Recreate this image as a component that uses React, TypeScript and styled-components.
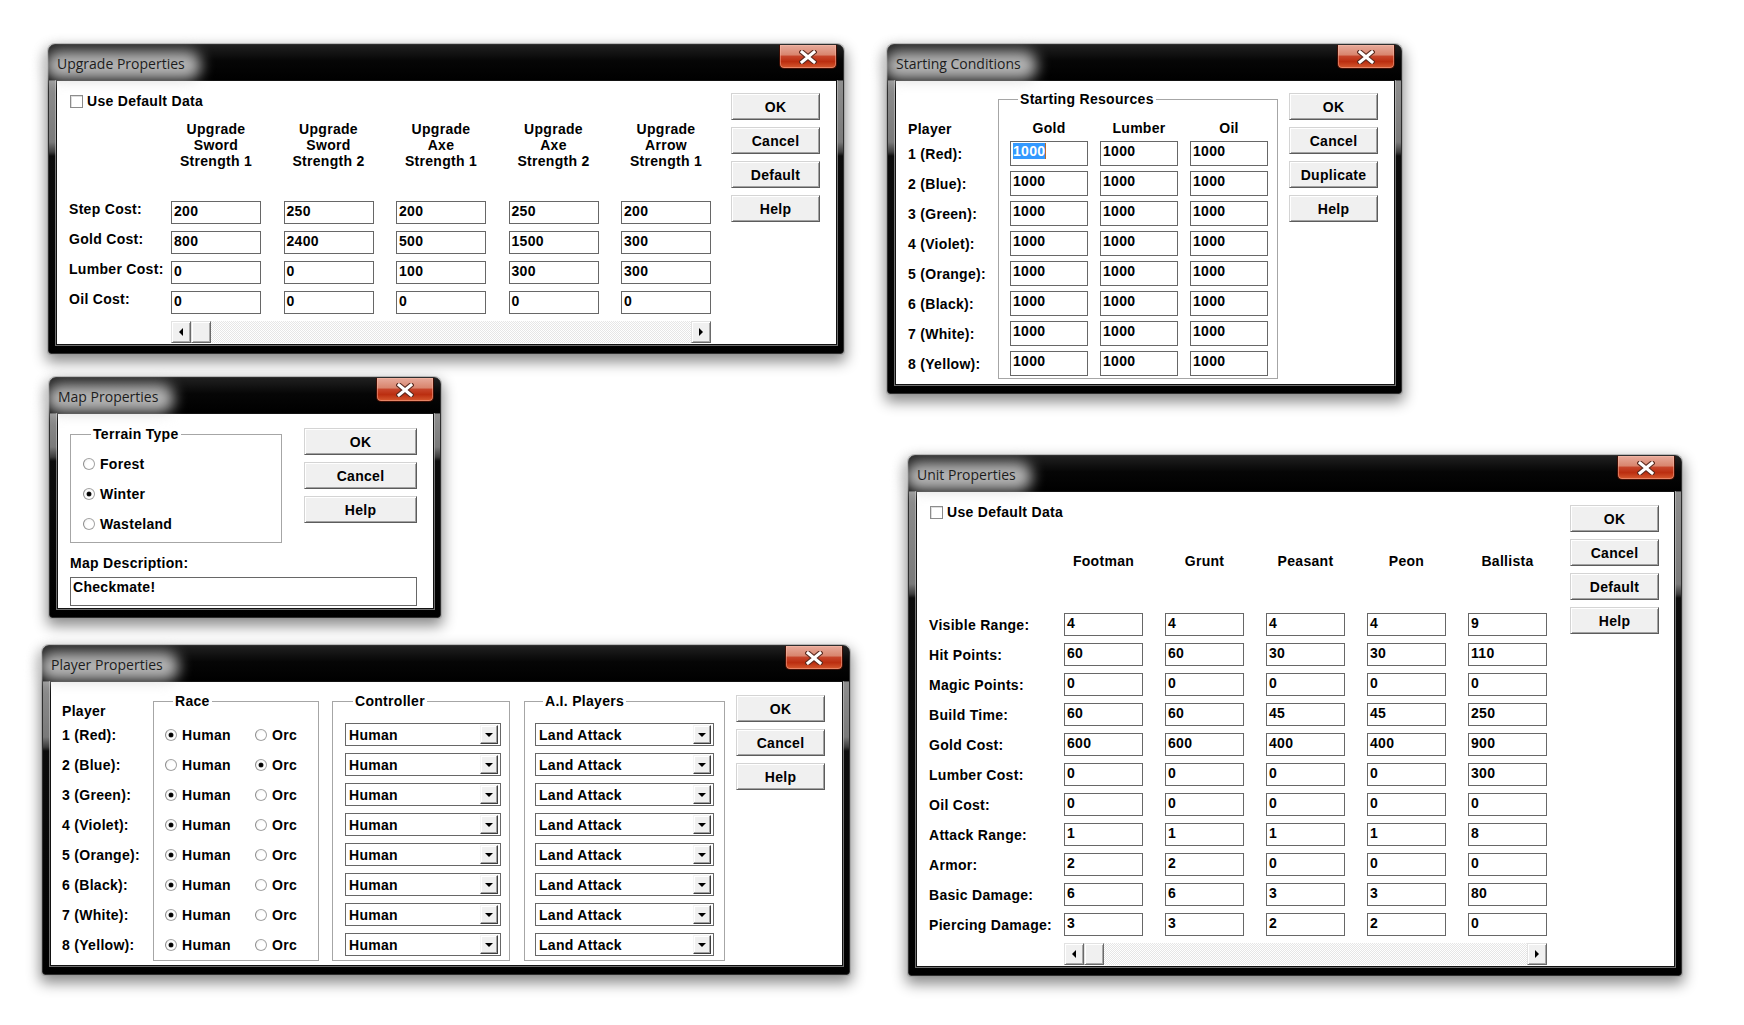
import React from "react";
import styled, { createGlobalStyle, css } from "styled-components";

const GlobalStyle = createGlobalStyle`
  *, *::before, *::after { box-sizing: border-box; }
  html, body { margin: 0; padding: 0; background: #ffffff; }
  body {
    font-family: "Liberation Sans", Arial, sans-serif;
    font-size: 14px;
    font-weight: 700;
    color: #000;
    letter-spacing: 0.3px;
  }
  #root { width: 1744px; height: 1025px; }
`;

const Desktop = styled.main`
  position: relative;
  width: 1744px;
  height: 1025px;
  overflow: hidden;
  background: #ffffff;
`;

/* ---------- window chrome ---------- */

const Frame = styled.section<{ $x: number; $y: number; $w: number; $h: number; $split: number }>`
  position: absolute;
  left: ${(p) => p.$x}px;
  top: ${(p) => p.$y}px;
  width: ${(p) => p.$w}px;
  height: ${(p) => p.$h}px;
  display: flex;
  flex-direction: column;
  border: 1px solid #2e2e2e;
  border-radius: 7px 7px 3px 3px;
  background: linear-gradient(
    180deg,
    #1a1a1a 0px,
    #101010 35px,
    #8e8e8e 36px,
    #7a7a7a ${(p) => p.$split - 14}px,
    #3c3c3c ${(p) => p.$split - 4}px,
    #0c0c0c ${(p) => p.$split}px,
    #000000 100%
  );
  box-shadow: 0 0 0 1px rgba(150, 150, 150, 0.55), 0 6px 14px 2px rgba(0, 0, 0, 0.45);
`;

const TitleBar = styled.header`
  height: 35px;
  flex: none;
  display: flex;
  align-items: flex-start;
  padding-left: 8px;
  border-radius: 6px 6px 0 0;
  background: linear-gradient(180deg, #202020 0%, #060606 45%, #000 100%);
  isolation: isolate;
`;

const TitleText = styled.h1`
  position: relative;
  margin: 9px 0 0 0;
  font-family: "Open Sans", "Noto Sans", sans-serif;
  font-weight: 400;
  font-size: 14px;
  line-height: 20px;
  letter-spacing: 0;
  color: #1c1c1c;
  white-space: nowrap;
  &::before {
    content: "";
    position: absolute;
    inset: -3px -16px -6px -12px;
    background: rgba(210, 210, 210, 0.85);
    filter: blur(7px);
    border-radius: 14px;
    z-index: -1;
  }
`;

const CloseButton = styled.div`
  margin-left: auto;
  margin-right: 6px;
  width: 58px;
  height: 24px;
  display: flex;
  align-items: center;
  justify-content: center;
  border: 1px solid #3e0e04;
  border-top: none;
  border-radius: 0 0 5px 5px;
  background: linear-gradient(
    180deg,
    #e7ab9c 0%,
    #d9866f 42%,
    #c6442a 50%,
    #bb2e10 72%,
    #d65a30 100%
  );
  box-shadow: inset 0 0 0 1px rgba(255, 190, 170, 0.45);
`;

const CloseGlyph = () => (
  <svg width="18" height="14" viewBox="0 0 18 14">
    <path d="M3 2 L15 12 M15 2 L3 12" stroke="#5b2a1f" strokeWidth="5.2" strokeLinecap="square" />
    <path d="M3 2 L15 12 M15 2 L3 12" stroke="#ffffff" strokeWidth="3" strokeLinecap="square" />
  </svg>
);

const Client = styled.div`
  flex: 1;
  min-height: 0;
  margin: 0 6px 8px 7px;
  display: flex;
  background: #ffffff;
  border: 1px solid #121212;
  box-shadow: 0 0 0 1px rgba(200, 200, 200, 0.55);
`;

type WinProps = {
  x: number;
  y: number;
  w: number;
  h: number;
  split: number;
  title: string;
  children: React.ReactNode;
};

function Win({ x, y, w, h, split, title, children }: WinProps) {
  return (
    <Frame $x={x} $y={y} $w={w} $h={h} $split={split}>
      <TitleBar>
        <TitleText>{title}</TitleText>
        <CloseButton>
          <CloseGlyph />
        </CloseButton>
      </TitleBar>
      <Client>{children}</Client>
    </Frame>
  );
}

/* ---------- controls ---------- */

const Body = styled.div<{ $pad: string }>`
  flex: 1;
  display: flex;
  align-items: flex-start;
  padding: ${(p) => p.$pad};
`;

const ContentColumn = styled.div`
  display: flex;
  flex-direction: column;
`;

const ButtonColumn = styled.div<{ $top: number }>`
  margin-left: auto;
  padding-top: ${(p) => p.$top}px;
  display: flex;
  flex-direction: column;
  gap: 7px;
`;

const PushButton = styled.div<{ $w?: number }>`
  width: ${(p) => p.$w ?? 89}px;
  height: 27px;
  display: flex;
  align-items: center;
  justify-content: center;
  background: #f0f0f0;
  border: 1px solid;
  border-color: #d4d4d4 #5c5c5c #5c5c5c #d4d4d4;
  box-shadow: inset 1px 1px 0 #ffffff, inset -1px -1px 0 #a2a2a2;
`;

const CheckRow = styled.div`
  height: 16px;
  display: flex;
  align-items: center;
  gap: 4px;
  padding-left: 1px;
`;

const CheckBox = styled.span`
  width: 13px;
  height: 13px;
  flex: none;
  border: 1px solid #8c8c8c;
  background: #fff;
  box-shadow: inset 1px 1px 0 #dedede;
`;

const Field = styled.div<{ $h?: number }>`
  height: ${(p) => p.$h ?? 23}px;
  border: 1px solid #676767;
  background: #ffffff;
  padding: 1px 2px 0;
  line-height: 16px;
  white-space: nowrap;
  overflow: hidden;
`;

const Selected = styled.span`
  background: #3399ff;
  color: #ffffff;
  border-right: 1px solid #b86a2a;
`;

const DataGrid = styled.div<{ $labelW: number; $colW: number; $gap: number; $top: number }>`
  margin-top: ${(p) => p.$top}px;
  display: grid;
  grid-template-columns: ${(p) => p.$labelW - p.$gap}px repeat(5, ${(p) => p.$colW}px);
  column-gap: ${(p) => p.$gap}px;
  row-gap: 7px;
`;

const ColHead = styled.div<{ $mb: number }>`
  margin-bottom: ${(p) => p.$mb}px;
  text-align: center;
  white-space: pre-line;
  line-height: 16px;
`;

const RowLabel = styled.div<{ $center: boolean }>`
  line-height: 16px;
  white-space: nowrap;
  align-self: ${(p) => (p.$center ? "center" : "start")};
`;

const ScrollTrack = styled.div`
  grid-column: 2 / -1;
  height: 22px;
  display: flex;
  background-color: #f4f4f4;
  background-image: repeating-conic-gradient(#ffffff 0 25%, #e6e6e6 0 50%);
  background-size: 2px 2px;
`;

const ScrollBtn = styled.div<{ $end?: boolean }>`
  width: 20px;
  height: 22px;
  display: flex;
  align-items: center;
  justify-content: center;
  margin-left: ${(p) => (p.$end ? "auto" : "0")};
  background: #f0f0f0;
  border: 1px solid;
  border-color: #e2e2e2 #6a6a6a #6a6a6a #e2e2e2;
  box-shadow: inset 1px 1px 0 #ffffff, inset -1px -1px 0 #a8a8a8;
`;

const Arrow = styled.span<{ $dir: "left" | "right" | "down" }>`
  width: 0;
  height: 0;
  ${(p) =>
    p.$dir === "left"
      ? css`
          border-top: 4px solid transparent;
          border-bottom: 4px solid transparent;
          border-right: 4px solid #000;
        `
      : p.$dir === "right"
      ? css`
          border-top: 4px solid transparent;
          border-bottom: 4px solid transparent;
          border-left: 4px solid #000;
        `
      : css`
          border-left: 4px solid transparent;
          border-right: 4px solid transparent;
          border-top: 4px solid #000;
        `}
`;

function HScroll() {
  return (
    <ScrollTrack>
      <ScrollBtn>
        <Arrow $dir="left" />
      </ScrollBtn>
      <ScrollBtn />
      <ScrollBtn $end>
        <Arrow $dir="right" />
      </ScrollBtn>
    </ScrollTrack>
  );
}

type TableProps = {
  headers: string[];
  rows: [string, string[]][];
  labelW: number;
  colW: number;
  gap: number;
  top: number;
  headGap: number;
  centerLabels: boolean;
};

function DataTable({ headers, rows, labelW, colW, gap, top, headGap, centerLabels }: TableProps) {
  return (
    <DataGrid $labelW={labelW} $colW={colW} $gap={gap} $top={top}>
      <span />
      {headers.map((h) => (
        <ColHead key={h} $mb={headGap}>
          {h}
        </ColHead>
      ))}
      {rows.map(([label, values]) => (
        <React.Fragment key={label}>
          <RowLabel $center={centerLabels}>{label}</RowLabel>
          {values.map((v, i) => (
            <Field key={i}>{v}</Field>
          ))}
        </React.Fragment>
      ))}
      <HScroll />
    </DataGrid>
  );
}

const Group = styled.fieldset<{ $w: number; $pad: string; $ml?: number }>`
  margin: 0 0 0 ${(p) => p.$ml ?? 0}px;
  width: ${(p) => p.$w}px;
  min-width: 0;
  padding: ${(p) => p.$pad};
  border: 1px solid #a6a6a6;
`;

const Legend = styled.legend`
  margin-left: 8px;
  padding: 0 2px;
  line-height: 16px;
`;

const PlayerColumn = styled.div<{ $w: number; $top: number; $rowH: number; $gap: number }>`
  width: ${(p) => p.$w}px;
  flex: none;
  padding-top: ${(p) => p.$top}px;
  display: flex;
  flex-direction: column;
  gap: ${(p) => p.$gap}px;
  & > div {
    height: ${(p) => p.$rowH}px;
    display: flex;
    align-items: center;
    white-space: nowrap;
  }
`;

const PlayerHead = styled.span<{ $adjust: number }>`
  line-height: 16px;
  margin-bottom: ${(p) => p.$adjust}px;
`;

const ResGrid = styled.div`
  display: grid;
  grid-template-columns: repeat(3, 78px);
  grid-template-rows: 16px;
  grid-auto-rows: 25px;
  column-gap: 12px;
  row-gap: 5px;
`;

const ResHead = styled.div`
  text-align: center;
  line-height: 16px;
`;

const RadioDot = styled.span<{ $on: boolean }>`
  position: relative;
  width: 12px;
  height: 12px;
  flex: none;
  border-radius: 50%;
  border: 1px solid #a3a3a3;
  border-left-color: #8a8a8a;
  background: radial-gradient(circle at 60% 60%, #ffffff 40%, #ececec 100%);
  ${(p) =>
    p.$on &&
    css`
      &::after {
        content: "";
        position: absolute;
        left: 3px;
        top: 3px;
        width: 4px;
        height: 4px;
        border-radius: 50%;
        background: #000;
        box-shadow: 0 0 0 0.5px #333;
      }
    `}
`;

const RadioItem = styled.div`
  display: flex;
  align-items: center;
  gap: 5px;
  line-height: 16px;
  white-space: nowrap;
`;

function Radio({ on, label }: { on: boolean; label: string }) {
  return (
    <RadioItem>
      <RadioDot $on={on} />
      <span>{label}</span>
    </RadioItem>
  );
}

const RaceGrid = styled.div`
  display: grid;
  grid-template-columns: 90px auto;
  grid-auto-rows: 23px;
  row-gap: 7px;
  align-items: center;
`;

const ComboList = styled.div`
  display: flex;
  flex-direction: column;
  gap: 7px;
`;

const Combo = styled.div<{ $w: number }>`
  width: ${(p) => p.$w}px;
  height: 23px;
  display: flex;
  align-items: center;
  padding: 0 2px 0 3px;
  border: 1px solid #676767;
  background: #ffffff;
`;

const ComboText = styled.span`
  flex: 1;
  white-space: nowrap;
`;

const DropButton = styled.span`
  width: 18px;
  height: 19px;
  display: flex;
  align-items: center;
  justify-content: center;
  background: #f0f0f0;
  border: 1px solid;
  border-color: #f4f4f4 #3f3f3f #3f3f3f #f4f4f4;
  box-shadow: inset -1px -1px 0 #a0a0a0, inset 1px 1px 0 #ffffff;
`;

function ComboBox({ w, value }: { w: number; value: string }) {
  return (
    <Combo $w={w}>
      <ComboText>{value}</ComboText>
      <DropButton>
        <Arrow $dir="down" />
      </DropButton>
    </Combo>
  );
}

const MapBody = styled.div`
  flex: 1;
  display: grid;
  grid-template-columns: 212px 1fr 113px;
  align-items: start;
  padding: 12px 16px 0 12px;
`;

const MapButtons = styled(ButtonColumn)`
  grid-column: 3;
`;

const RadioStack = styled.div`
  display: flex;
  flex-direction: column;
  gap: 14px;
`;

const WideLabel = styled.div`
  grid-column: 1 / -1;
  margin-top: 10px;
  line-height: 16px;
`;

const TextBox = styled.div`
  grid-column: 1 / -1;
  margin-top: 3px;
  height: 29px;
  border: 1px solid #676767;
  padding: 1px 2px 0;
  line-height: 16px;
`;

/* ---------- data ---------- */

const upgradeHeaders = [
  "Upgrade\nSword\nStrength 1",
  "Upgrade\nSword\nStrength 2",
  "Upgrade\nAxe\nStrength 1",
  "Upgrade\nAxe\nStrength 2",
  "Upgrade\nArrow\nStrength 1",
];

const upgradeRows: [string, string[]][] = [
  ["Step Cost:", ["200", "250", "200", "250", "200"]],
  ["Gold Cost:", ["800", "2400", "500", "1500", "300"]],
  ["Lumber Cost:", ["0", "0", "100", "300", "300"]],
  ["Oil Cost:", ["0", "0", "0", "0", "0"]],
];

const unitHeaders = ["Footman", "Grunt", "Peasant", "Peon", "Ballista"];

const unitRows: [string, string[]][] = [
  ["Visible Range:", ["4", "4", "4", "4", "9"]],
  ["Hit Points:", ["60", "60", "30", "30", "110"]],
  ["Magic Points:", ["0", "0", "0", "0", "0"]],
  ["Build Time:", ["60", "60", "45", "45", "250"]],
  ["Gold Cost:", ["600", "600", "400", "400", "900"]],
  ["Lumber Cost:", ["0", "0", "0", "0", "300"]],
  ["Oil Cost:", ["0", "0", "0", "0", "0"]],
  ["Attack Range:", ["1", "1", "1", "1", "8"]],
  ["Armor:", ["2", "2", "0", "0", "0"]],
  ["Basic Damage:", ["6", "6", "3", "3", "80"]],
  ["Piercing Damage:", ["3", "3", "2", "2", "0"]],
];

const players = [
  "1 (Red):",
  "2 (Blue):",
  "3 (Green):",
  "4 (Violet):",
  "5 (Orange):",
  "6 (Black):",
  "7 (White):",
  "8 (Yellow):",
];

export default function App() {
  return (
    <>
      <GlobalStyle />
      <Desktop>
        {/* Upgrade Properties */}
        <Win x={48} y={44} w={796} h={310} split={111} title="Upgrade Properties">
          <Body $pad="12px 16px 0 12px">
            <ContentColumn>
              <CheckRow>
                <CheckBox />
                <span>Use Default Data</span>
              </CheckRow>
              <DataTable
                headers={upgradeHeaders}
                rows={upgradeRows}
                labelW={102}
                colW={90}
                gap={22.5}
                top={12}
                headGap={25}
                centerLabels={false}
              />
            </ContentColumn>
            <ButtonColumn $top={0}>
              <PushButton>OK</PushButton>
              <PushButton>Cancel</PushButton>
              <PushButton>Default</PushButton>
              <PushButton>Help</PushButton>
            </ButtonColumn>
          </Body>
        </Win>

        {/* Starting Conditions */}
        <Win x={887} y={44} w={515} h={350} split={111} title="Starting Conditions">
          <Body $pad="10px 16px 0 12px">
            <PlayerColumn $w={90} $top={30} $rowH={25} $gap={5}>
              <PlayerHead $adjust={-1}>Player</PlayerHead>
              {players.map((p) => (
                <div key={p}>{p}</div>
              ))}
            </PlayerColumn>
            <Group $w={280} $pad="13px 9px 2px 11px">
              <Legend>Starting Resources</Legend>
              <ResGrid>
                <ResHead>Gold</ResHead>
                <ResHead>Lumber</ResHead>
                <ResHead>Oil</ResHead>
                {players.map((p, r) =>
                  [0, 1, 2].map((c) => (
                    <Field key={p + c} $h={25}>
                      {r === 0 && c === 0 ? <Selected>1000</Selected> : "1000"}
                    </Field>
                  ))
                )}
              </ResGrid>
            </Group>
            <ButtonColumn $top={2}>
              <PushButton>OK</PushButton>
              <PushButton>Cancel</PushButton>
              <PushButton>Duplicate</PushButton>
              <PushButton>Help</PushButton>
            </ButtonColumn>
          </Body>
        </Win>

        {/* Map Properties */}
        <Win x={49} y={377} w={392} h={241} split={83} title="Map Properties">
          <MapBody>
            <Group $w={212} $pad="14px 8px 10px 12px">
              <Legend>Terrain Type</Legend>
              <RadioStack>
                <Radio on={false} label="Forest" />
                <Radio on={true} label="Winter" />
                <Radio on={false} label="Wasteland" />
              </RadioStack>
            </Group>
            <MapButtons $top={2}>
              <PushButton $w={113}>OK</PushButton>
              <PushButton $w={113}>Cancel</PushButton>
              <PushButton $w={113}>Help</PushButton>
            </MapButtons>
            <WideLabel>Map Description:</WideLabel>
            <TextBox>Checkmate!</TextBox>
          </MapBody>
        </Win>

        {/* Player Properties */}
        <Win x={42} y={645} w={808} h={330} split={105} title="Player Properties">
          <Body $pad="11px 17px 0 11px">
            <PlayerColumn $w={91} $top={10} $rowH={23} $gap={7}>
              <PlayerHead $adjust={-3}>Player</PlayerHead>
              {players.map((p) => (
                <div key={p}>{p}</div>
              ))}
            </PlayerColumn>
            <Group $w={166} $pad="14px 8px 4px 11px">
              <Legend>Race</Legend>
              <RaceGrid>
                {players.map((p, i) => (
                  <React.Fragment key={p}>
                    <Radio on={i !== 1} label="Human" />
                    <Radio on={i === 1} label="Orc" />
                  </React.Fragment>
                ))}
              </RaceGrid>
            </Group>
            <Group $w={178} $ml={13} $pad="14px 8px 4px 12px">
              <Legend>Controller</Legend>
              <ComboList>
                {players.map((p) => (
                  <ComboBox key={p} w={156} value="Human" />
                ))}
              </ComboList>
            </Group>
            <Group $w={201} $ml={14} $pad="14px 8px 4px 10px">
              <Legend>A.I. Players</Legend>
              <ComboList>
                {players.map((p) => (
                  <ComboBox key={p} w={179} value="Land Attack" />
                ))}
              </ComboList>
            </Group>
            <ButtonColumn $top={2}>
              <PushButton>OK</PushButton>
              <PushButton>Cancel</PushButton>
              <PushButton>Help</PushButton>
            </ButtonColumn>
          </Body>
        </Win>

        {/* Unit Properties */}
        <Win x={908} y={455} w={774} h={521} split={142} title="Unit Properties">
          <Body $pad="12px 15px 0 12px">
            <ContentColumn>
              <CheckRow>
                <CheckBox />
                <span>Use Default Data</span>
              </CheckRow>
              <DataTable
                headers={unitHeaders}
                rows={unitRows}
                labelW={135}
                colW={79}
                gap={22}
                top={33}
                headGap={37}
                centerLabels={true}
              />
            </ContentColumn>
            <ButtonColumn $top={1}>
              <PushButton>OK</PushButton>
              <PushButton>Cancel</PushButton>
              <PushButton>Default</PushButton>
              <PushButton>Help</PushButton>
            </ButtonColumn>
          </Body>
        </Win>
      </Desktop>
    </>
  );
}
